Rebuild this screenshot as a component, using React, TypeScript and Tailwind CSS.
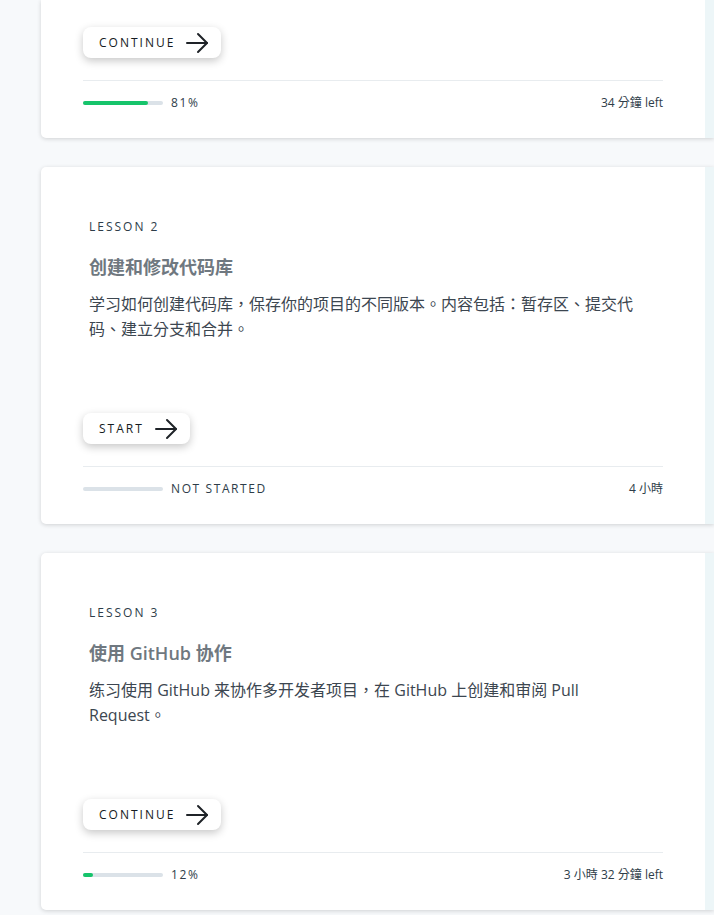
import React from 'react';

type Lesson = {
  label?: string;
  title?: string;
  body?: string;
  action: string;
  progress: number;
  status: string;
  timeLeft: string;
};

const lessons: Lesson[] = [
  { action: 'CONTINUE', progress: 81, status: '81%', timeLeft: '34 分鐘 left' },
  {
    label: 'LESSON 2',
    title: '创建和修改代码库',
    body: '学习如何创建代码库，保存你的项目的不同版本。内容包括：暂存区、提交代码、建立分支和合并。',
    action: 'START',
    progress: 0,
    status: 'NOT STARTED',
    timeLeft: '4 小時',
  },
  {
    label: 'LESSON 3',
    title: '使用 GitHub 协作',
    body: '练习使用 GitHub 来协作多开发者项目，在 GitHub 上创建和审阅 Pull Request。',
    action: 'CONTINUE',
    progress: 12,
    status: '12%',
    timeLeft: '3 小時 32 分鐘 left',
  },
];

const Arrow = () => (
  <svg width="24" height="22" viewBox="0 0 24 22" fill="none" stroke="#1f2328" strokeWidth="2" strokeLinecap="round" strokeLinejoin="round">
    <path d="M2 11h20" />
    <path d="M13 2l9 9-9 9" />
  </svg>
);

const LessonCard = ({ lesson, first }: { lesson: Lesson; first?: boolean }) => (
  <div className={`flex bg-white shadow-[0_1px_4px_rgba(0,0,0,0.16)] ${first ? 'rounded-bl-[5px]' : 'rounded-l-[5px]'}`}>
    <div className={`w-[664px] px-[42px] pb-[27px] ${first ? 'pt-[27px]' : ''}`}>
      {!first && (
        <div className="h-[246px] px-[6px] pt-[52px]">
          <div className="text-[12px] leading-[16px] tracking-[2px] font-medium text-[#2e3d49]">{lesson.label}</div>
          <div className="mt-[20px] text-[18px] leading-[24px] font-semibold text-[#6f7880]">{lesson.title}</div>
          <p className="mt-[13px] max-w-[552px] text-[16px] leading-[25px] text-[#3c4650]">{lesson.body}</p>
        </div>
      )}
      <button className="flex h-[31px] items-center gap-[10px] rounded-[8px] bg-white pl-[16px] pr-[12px] shadow-[0_3px_8px_rgba(0,0,0,0.22)]">
        <span className="text-[12px] font-normal tracking-[2px] text-[#151b22]">{lesson.action}</span>
        <Arrow />
      </button>
      <div className="mt-[22px] border-t border-[#e8ecef] pt-[14px]">
        <div className="flex h-[16px] items-center justify-between">
          <div className="flex items-center gap-[8px]">
            <div className="h-[4px] w-[80px] rounded-full bg-[#dbe2e8]">
              <div className="h-[4px] rounded-full bg-[#16c46b]" style={{ width: `${lesson.progress}%` }} />
            </div>
            <span className="text-[12px] font-medium tracking-[1.6px] text-[#2e3d49]">{lesson.status}</span>
          </div>
          <span className="text-[12px] font-normal text-[#2e3d49]">{lesson.timeLeft}</span>
        </div>
      </div>
    </div>
    <div className="flex-1 bg-[#edf6f8]" />
  </div>
);

export default function App() {
  return (
    <div
      className="min-h-[915px] w-[714px] overflow-hidden bg-[#f7f9fb] pl-[41px]"
      style={{ fontFamily: '"Open Sans", "Noto Sans CJK TC", sans-serif' }}
    >
      <div className="flex flex-col gap-[29px]">
        {lessons.map((l, i) => (
          <LessonCard key={i} lesson={l} first={i === 0} />
        ))}
      </div>
    </div>
  );
}
